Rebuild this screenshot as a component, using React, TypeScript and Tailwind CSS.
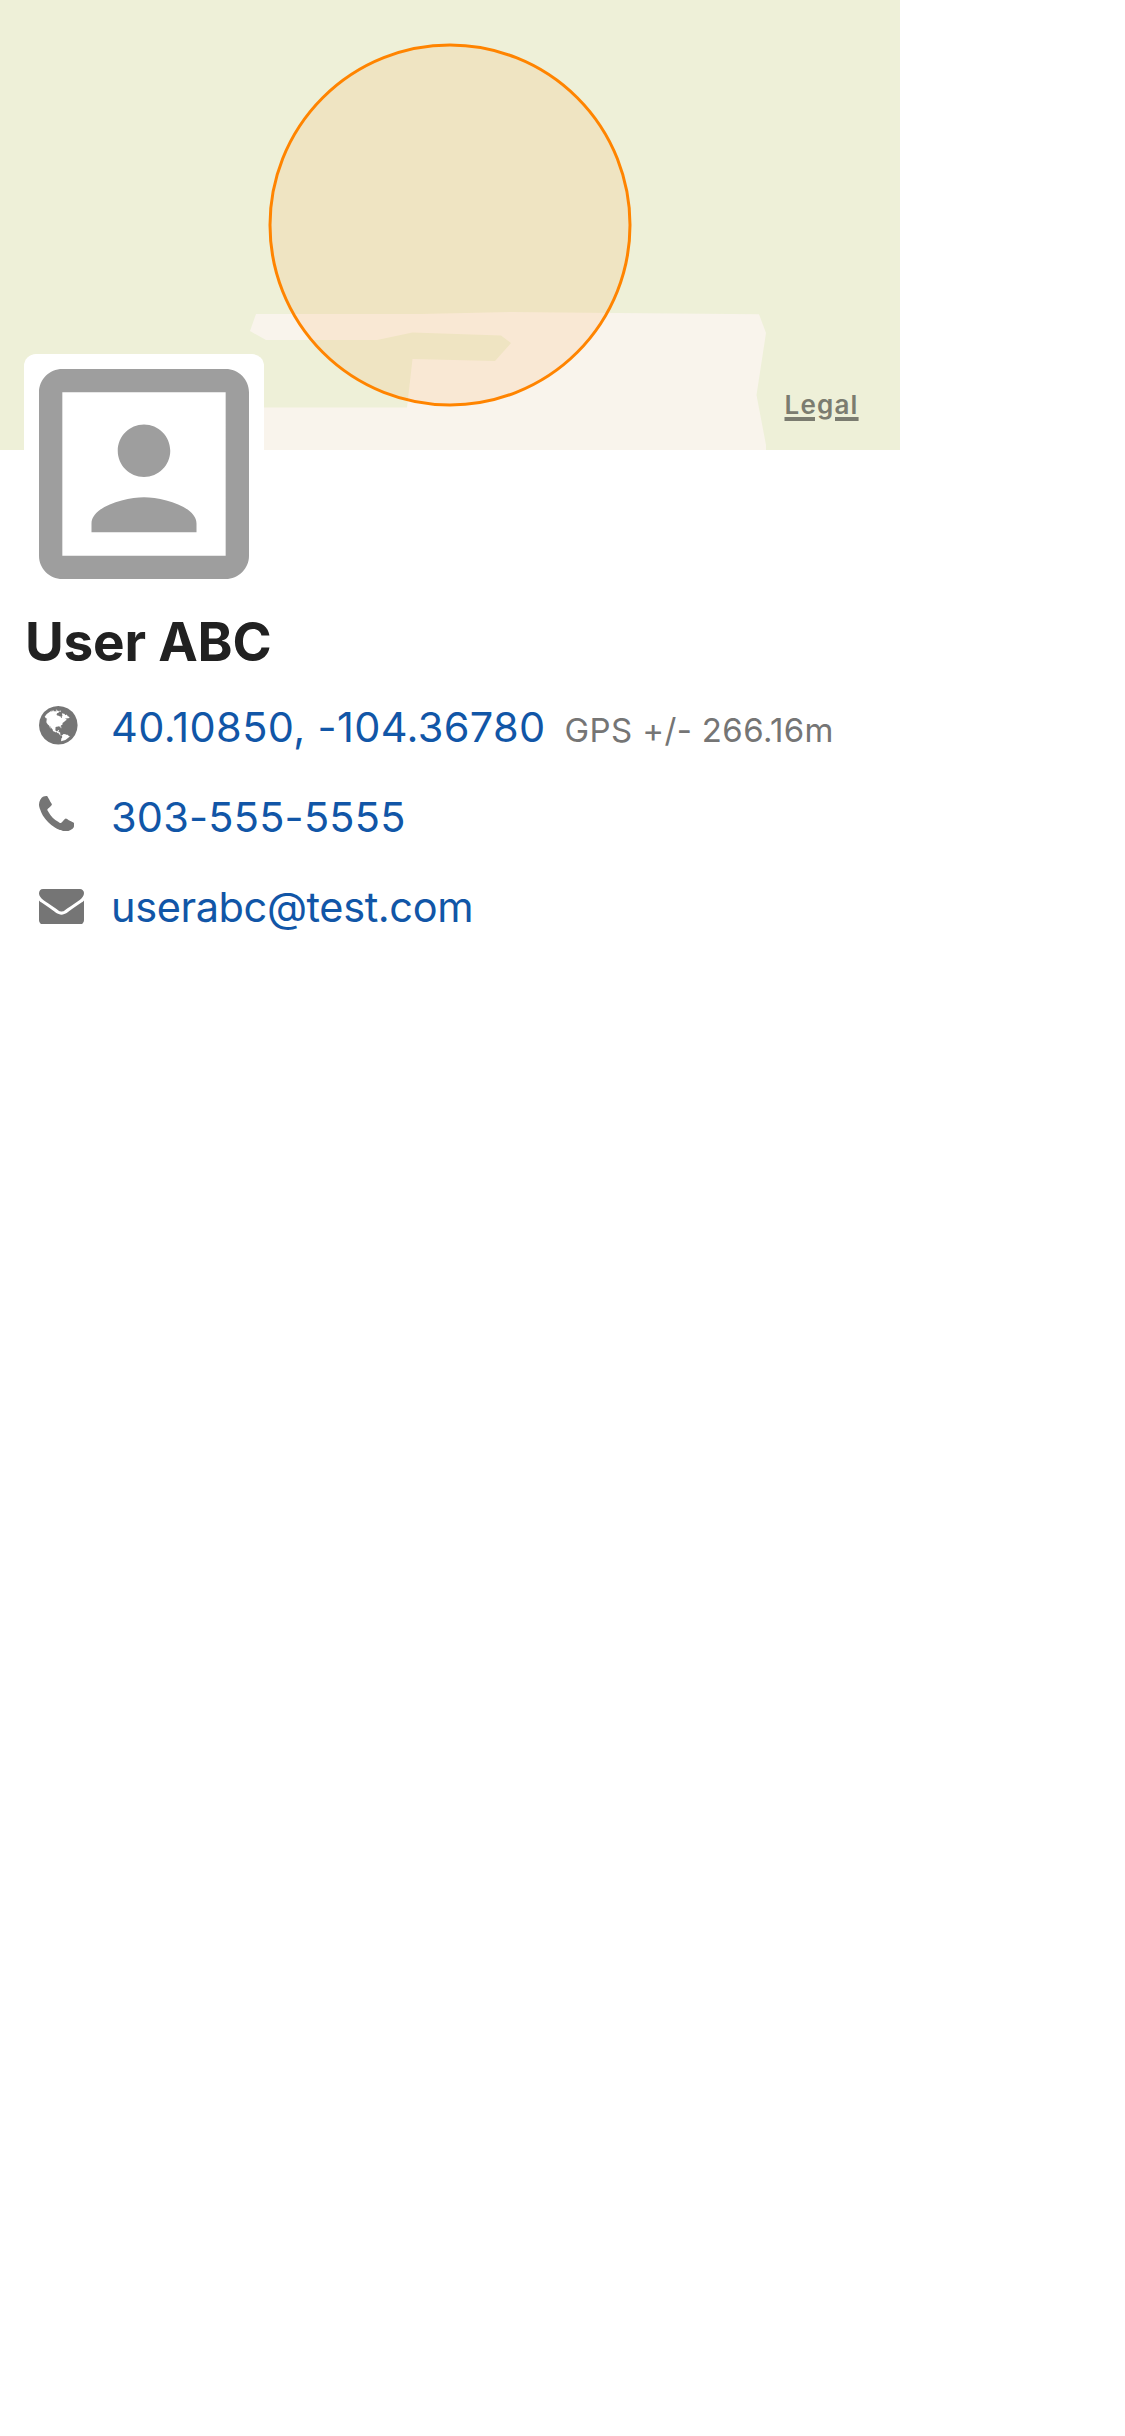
import type { ReactNode } from 'react';

function LocationMap() {
  return (
    <svg className="block h-[450px] w-[900px]" viewBox="0 0 900 450">
      <rect width="900" height="450" fill="#eef0d8" />
      <path
        fill="#f9f4ec"
        d="M256 314H420L510 312L560 312.5L759 314.3L766 333L756.5 395L766 445V450H230V407.5H407L412.5 359L495 361L511 343L501 335.5L412.5 332.5L377 340H266L250 331Z"
      />
      <circle cx="450" cy="225" r="180" fill="#ff8000" fillOpacity="0.1" stroke="#ff8400" strokeWidth="3" />
    </svg>
  );
}

function AvatarIcon() {
  return (
    <svg className="block size-[210px]" viewBox="3 3 18 18" fill="#9e9e9e">
      <path d="M12 12.25c1.24 0 2.25-1.01 2.25-2.25S13.24 7.75 12 7.75 9.75 8.76 9.75 10s1.01 2.25 2.25 2.25zm4.5 4c0-1.5-3-2.25-4.5-2.25s-4.5.75-4.5 2.25V17h9v-.75zM19 3H5c-1.1 0-2 .9-2 2v14c0 1.1.9 2 2 2h14c1.1 0 2-.9 2-2V5c0-1.1-.9-2-2-2zm0 16H5V5h14v14z" />
    </svg>
  );
}

function GlobeIcon() {
  return (
    <svg className="block size-[38.6px]" viewBox="128 128 1536 1536" fill="#757575">
      <path d="M896 128q209 0 385.5 103t279.5 279.5 103 385.5-103 385.5-279.5 279.5-385.5 103-385.5-103-279.5-279.5-103-385.5 103-385.5 279.5-279.5 385.5-103zm274 521q-2 1-9.5 9.5t-13.5 9.5q2 0 4.5-5t5-11 3.5-7q6-7 22-15 14-6 52-12 34-8 51 11-2-2 9.5-13t14.5-12q3-2 15-4.5t15-7.5l2-22q-12 1-17.5-7t-6.5-21q0 2-6 8 0-7-4.5-8t-11.5 1-9 1q-10-3-15-7.5t-8-16.5-4-15q-2-5-9.5-11t-9.5-10q-1-2-2.5-5.5t-3-6.5-4-5.5-5.5-2.5-7 5-7.5 10-4.5 5q-3-2-6-1.5t-4.5 1-4.5 3-5 3.5q-3 2-8.5 3t-8.5 2q15-5-1-11-10-4-16-3 9-4 7.5-12t-8.5-14h5q-1-4-8.5-8.5t-17.5-8.5-13-6q-8-5-34-9.5t-33-.5q-5 6-4.5 10.5t4 14 3.5 12.5q1 6-5.5 13t-6.5 12q0 7 14 15.5t10 21.5q-3 8-16 16t-16 12q-5 8-1.5 18.5t10.5 16.5q2 2 1.5 4t-3.5 4.5-5.5 4-6.5 3.5l-3 2q-11 5-20.5-6t-13.5-26q-7-25-16-30-23-8-29 1-5-13-41-26-25-9-58-4 6-1 0-15-7-15-19-12 3-6 4-17.5t1-13.5q3-13 12-23 1-1 7-8.5t9.5-13.5.5-6q35 4 50-11 5-5 11.5-17t10.5-17q9-6 14-5.5t14.5 5.5 14.5 5q14 1 15.5-11t-7.5-20q12 1 3-17-4-7-8-9-12-4-27 5-8 4 2 8-1-1-9.5 10.5t-16.5 17.5-16-5q-1-1-5.5-13.5t-9.5-13.5q-8 0-16 15 3-8-11-15t-24-8q19-12-8-27-7-4-20.5-5t-19.5 4q-5 7-5.5 11.5t5 8 10.5 5.5 11.5 4 8.5 3q14 10 8 14-2 1-8.5 3.5t-11.5 4.5-6 4q-3 4 0 14t-2 14q-5-5-9-17.5t-7-16.5q7 9-25 6l-10-1q-4 0-16 2t-20.5 1-13.5-8q-4-8 0-20 1-4 4-2-4-3-11-9.5t-10-8.5q-46 15-94 41 6 1 12-1 5-2 13-6.5t10-5.5q34-14 42-7l5-5q14 16 20 25-7-4-30-1-20 6-22 12 7 12 5 18-4-3-11.5-10t-14.5-11-15-5q-16 0-22 1-146 80-235 222 7 7 12 8 4 1 5 9t2.5 11 11.5-3q9 8 3 19 1-1 44 27 19 17 21 21 3 11-10 18-1-2-9-9t-9-4q-3 5 .5 18.5t10.5 12.5q-7 0-9.5 16t-2.5 35.5-1 23.5l2 1q-3 12 5.5 34.5t21.5 19.5q-13 3 20 43 6 8 8 9 3 2 12 7.5t15 10 10 10.5q4 5 10 22.5t14 23.5q-2 6 9.5 20t10.5 23q-1 0-2.5 1t-2.5 1q3 7 15.5 14t15.5 13q1 3 2 10t3 11 8 2q2-20-24-62-15-25-17-29-3-5-5.5-15.5t-4.5-14.5q2 0 6 1.5t8.5 3.5 7.5 4 2 3q-3 7 2 17.5t12 18.5 17 19 12 13q6 6 14 19.5t0 13.5q9 0 20 10.5t17 19.5q5 8 8 26t5 24q2 7 8.5 13.5t12.5 9.5l16 8 13 7q5 2 18.5 10.5t21.5 11.5q10 4 16 4t14.5-2.5 13.5-3.5q15-2 29 15t21 21q36 19 55 11-2 1 .5 7.5t8 15.5 9 14.5 5.5 8.5q5 6 18 15t18 15q6-4 7-9-3 8 7 20t18 10q14-3 14-32-31 15-49-18 0-1-2.5-5.5t-4-8.5-2.5-8.5 0-7.5 5-3q9 0 10-3.5t-2-12.5-4-13q-1-8-11-20t-12-15q-5 9-16 8t-16-9q0 1-1.5 5.5t-1.5 6.5q-13 0-15-1 1-3 2.5-17.5t3.5-22.5q1-4 5.5-12t7.5-14.5 4-12.5-4.5-9.5-17.5-2.5q-19 1-26 20-1 3-3 10.5t-5 11.5-9 7q-7 3-24 2t-24-5q-13-8-22.5-29t-9.5-37q0-10 2.5-26.5t3-25-5.5-24.5q3-2 9-9.5t10-10.5q2-1 4.5-1.5t4.5 0 4-1.5 3-6q-1-1-4-3-3-3-4-3 7 3 28.5-1.5t27.5 1.5q15 11 22-2 0-1-2.5-9.5t-.5-13.5q5 27 29 9 3 3 15.5 5t17.5 5q3 2 7 5.5t5.5 4.5 5-.5 8.5-6.5q10 14 12 24 11 40 19 44 7 3 11 2t4.5-9.5 0-14-1.5-12.5l-1-8v-18l-1-8q-15-3-18.5-12t1.5-18.5 15-18.5q1-1 8-3.5t15.5-6.5 12.5-8q21-19 15-35 7 0 11-9-1 0-5-3t-7.5-5-4.5-2q9-5 2-16 5-3 7.5-11t7.5-10q9 12 21 2 8-8 1-16 5-7 20.5-10.5t18.5-9.5q7 2 8-2t1-12 3-12q4-5 15-9t13-5l17-11q3-4 0-4 18 2 31-11 10-11-6-20 3-6-3-9.5t-15-5.5q3-1 11.5-.5t10.5-1.5q15-10-7-16-17-5-43 12zm-163 877q206-36 351-189-3-3-12.5-4.5t-12.5-3.5q-18-7-24-8 1-7-2.5-13t-8-9-12.5-8-11-7q-2-2-7-6t-7-5.5-7.5-4.5-8.5-2-10 1l-3 1q-3 1-5.5 2.5t-5.5 3-4 3 0 2.5q-21-17-36-22-5-1-11-5.5t-10.5-7-10-1.5-11.5 7q-5 5-6 15t-2 13q-7-5 0-17.5t2-18.5q-3-6-10.5-4.5t-12 4.5-11.5 8.5-9 6.5-8.5 5.5-8.5 7.5q-3 4-6 12t-5 11q-2-4-11.5-6.5t-9.5-5.5q2 10 4 35t5 38q7 31-12 48-27 25-29 40-4 22 12 26 0 7-8 20.5t-7 21.5q0 6 2 16z" />
    </svg>
  );
}

function PhoneIcon() {
  return (
    <svg className="block size-[35.4px]" viewBox="192 128 1408 1408" fill="#757575">
      <path d="M1600 1240q0 27-10 70.5t-21 68.5q-21 50-122 106-94 51-186 51-27 0-53-3.5t-57.5-12.5-47-14.5-55.5-20.5-49-18q-98-35-175-83-127-79-264-216t-216-264q-48-77-83-175-3-9-18-49t-20.5-55.5-14.5-47-12.5-57.5-3.5-53q0-92 51-186 56-101 106-122 25-11 68.5-21t70.5-10q14 0 21 3 18 6 53 76 11 19 30 54t35 63.5 31 53.5q3 4 17.5 25t21.5 35.5 7 28.5q0 20-28.5 50t-62 55-62 53-28.5 46q0 9 5 22.5t8.5 20.5 14 24 11.5 19q76 137 174 235t235 174q2 1 19 11.5t24 14 20.5 8.5 22.5 5q18 0 46-28.5t53-62 55-62 50-28.5q14 0 28.5 7t35.5 21.5 25 17.5q25 15 53.5 31t63.5 35 54 30q70 35 76 53 3 7 3 21z" />
    </svg>
  );
}

function MailIcon() {
  return (
    <svg className="block h-[35.4px] w-[45px]" viewBox="0 256 1792 1408" fill="#757575">
      <path d="M1792 710v794q0 66-47 113t-113 47h-1472q-66 0-113-47t-47-113v-794q44 49 101 87 362 246 497 345 57 42 92.5 65.5t94.5 48 110 24.5h2q51 0 110-24.5t94.5-48 92.5-65.5q170-123 498-345 57-39 100-87zm0-294q0 79-49 151t-122 123q-376 261-468 325-10 7-42.5 31t-54 38.8-52 33.2-57.5 27-50 9h-2q-23 0-50-9t-57.5-27-52-33.2-54-38.8-42.5-31q-91-64-262-182.5t-205-142.5q-62-42-117-115.5t-55-136.5q0-78 41.5-130t118.5-52h1472q65 0 112.5 47t47.5 113z" />
    </svg>
  );
}

function ContactRow({ icon, children }: { icon: ReactNode; children: ReactNode }) {
  return (
    <div className="flex h-[90px] items-start pl-[39px]">
      <div className="w-[72px] shrink-0">{icon}</div>
      <div className="-mt-1 flex items-baseline whitespace-nowrap text-[41.5px] leading-[50px] text-[#1156a7]">
        {children}
      </div>
    </div>
  );
}

export default function App() {
  return (
    <div className="min-h-[2436px] w-[1125px] bg-white font-['Inter',sans-serif]">
      <header className="relative h-[450px] w-[900px]">
        <LocationMap />
        <a className="absolute left-[784.5px] top-[387px] text-[26px] font-semibold leading-[36px] tracking-[1.2px] text-[#7b7c70] underline decoration-[4px] underline-offset-[3px]">
          Legal
        </a>
      </header>
      <main className="relative -mt-24">
        <div className="ml-6 w-[240px] rounded-xl bg-white p-[15px]">
          <AvatarIcon />
        </div>
        <h1 className="ml-[25px] mt-[14px] h-[98px] text-[53px] font-bold leading-[68px] tracking-[-0.2px] text-[#212121]">
          User ABC
        </h1>
        <ContactRow icon={<GlobeIcon />}>
          <span className="tracking-[0.35px]">40.10850, -104.36780</span>
          <span className="ml-[19px] text-[33px] tracking-[0.37px] text-[#757575]">GPS +/- 266.16m</span>
        </ContactRow>
        <ContactRow icon={<PhoneIcon />}>
          <span className="tracking-[0.2px]">303-555-5555</span>
        </ContactRow>
        <ContactRow icon={<div className="pt-[3px]"><MailIcon /></div>}>
          <span className="tracking-[-0.4px]">userabc@test.com</span>
        </ContactRow>
      </main>
    </div>
  );
}
